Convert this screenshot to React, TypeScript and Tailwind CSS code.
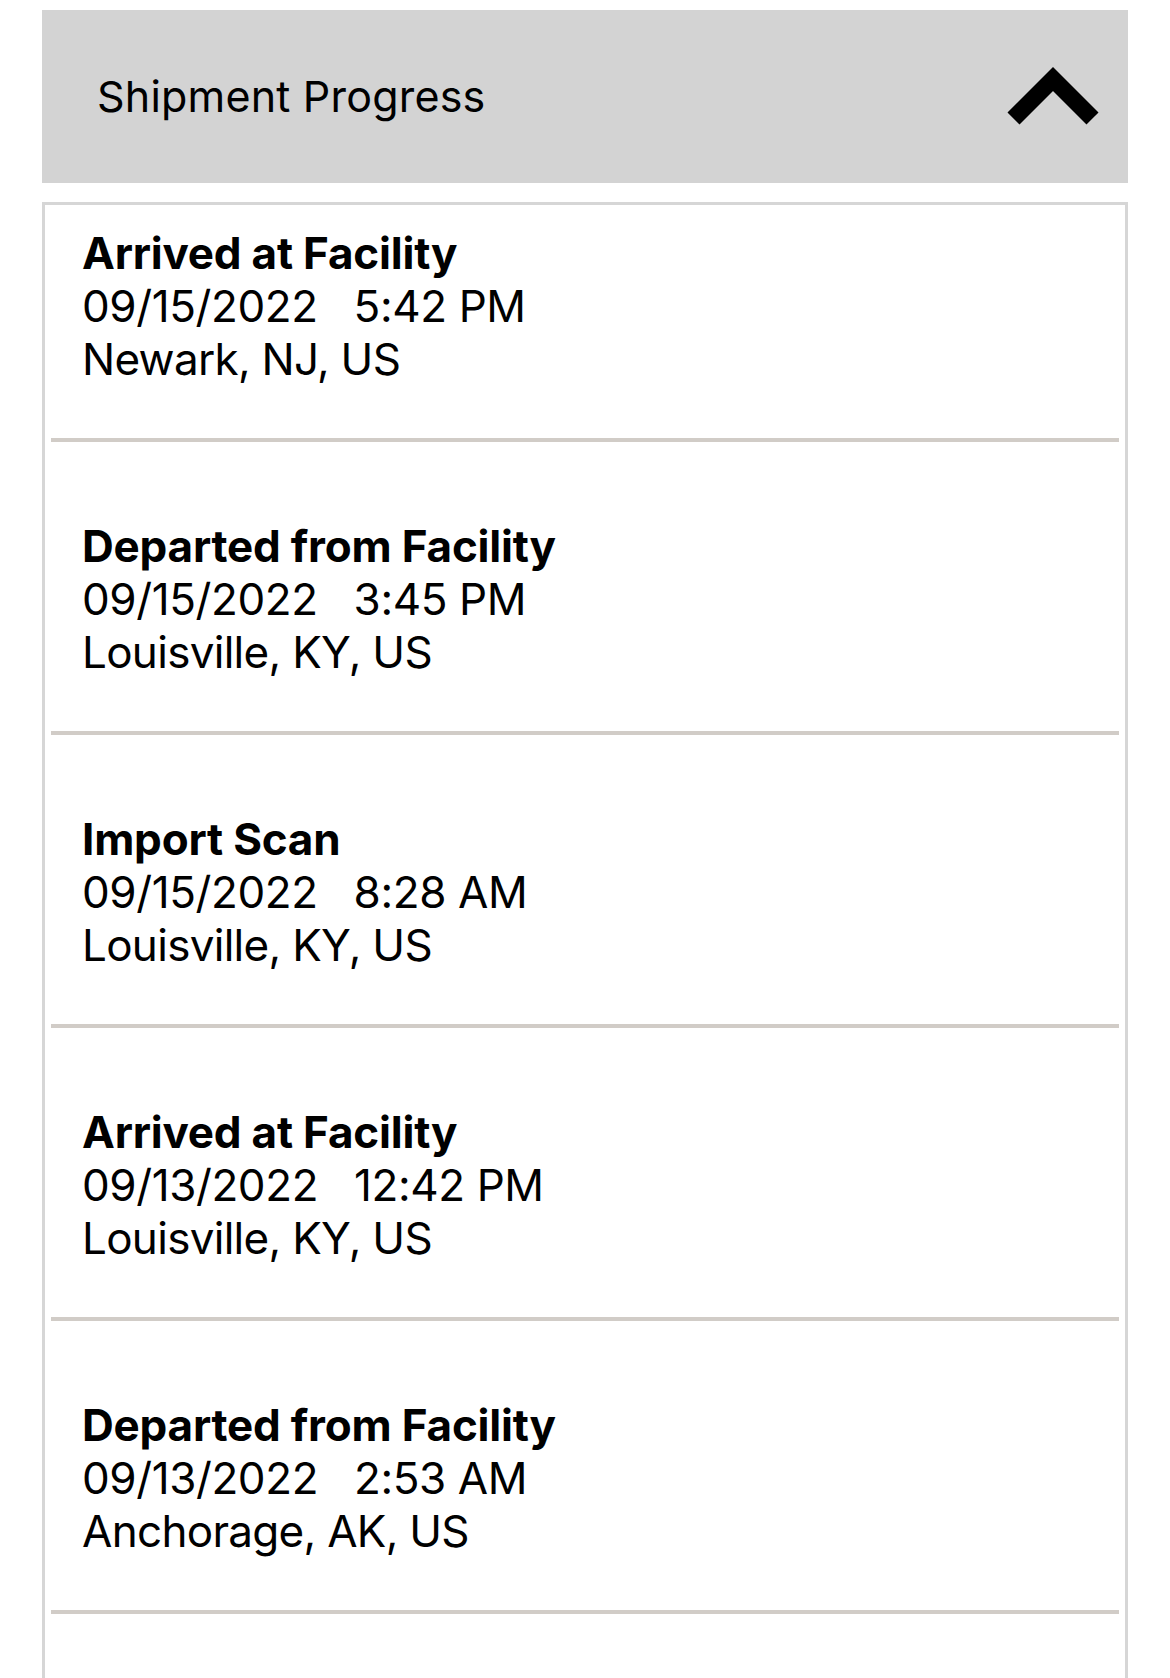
import React from 'react'

type Scan = {
  status: string
  date: string
  time: string
  location: string
}

const scans: Scan[] = [
  { status: 'Arrived at Facility', date: '09/15/2022', time: '5:42 PM', location: 'Newark, NJ, US' },
  { status: 'Departed from Facility', date: '09/15/2022', time: '3:45 PM', location: 'Louisville, KY, US' },
  { status: 'Import Scan', date: '09/15/2022', time: '8:28 AM', location: 'Louisville, KY, US' },
  { status: 'Arrived at Facility', date: '09/13/2022', time: '12:42 PM', location: 'Louisville, KY, US' },
  { status: 'Departed from Facility', date: '09/13/2022', time: '2:53 AM', location: 'Anchorage, AK, US' },
]

function ChevronUp() {
  return (
    <svg width="96" height="64" viewBox="0 0 96 64" fill="none">
      <polyline
        points="8.5,53.5 48,14 87.5,53.5"
        stroke="#000"
        strokeWidth="17"
        strokeLinejoin="miter"
        strokeLinecap="butt"
      />
    </svg>
  )
}

function ScanRow({ scan }: { scan: Scan }) {
  return (
    <div>
      <div className="pl-[37px] pr-6 pt-[78px] pb-[52px] text-[44px] leading-[53px] text-black tracking-[-0.5px]">
        <div className="font-bold tracking-[-0.2px]">{scan.status}</div>
        <div className="whitespace-pre tracking-[-0.4px]">{scan.date}{'   '}{scan.time}</div>
        <div className="tracking-[-0.7px]">{scan.location}</div>
      </div>
      <div className="mx-[6px] h-[4px] bg-[#d1ccc7]" />
    </div>
  )
}

export default function App() {
  return (
    <div
      className="h-[1678px] overflow-hidden bg-white px-[42px] pt-[10px]"
      style={{ fontFamily: 'Inter, "Noto Sans", sans-serif' }}
    >
      <button className="flex h-[173px] w-full items-center justify-between bg-[#d3d3d3] pl-[55px] pr-[27px]">
        <span className="text-[43px] font-normal text-black tracking-[0.2px]">Shipment Progress</span>
        <ChevronUp />
      </button>

      <div className="mt-[19px] border-[3px] border-[#d6d6d6] pb-[300px] [&>div:first-child>div:first-child]:pt-[22px]">
        {scans.map((s, i) => (
          <ScanRow key={i} scan={s} />
        ))}
      </div>
    </div>
  )
}
